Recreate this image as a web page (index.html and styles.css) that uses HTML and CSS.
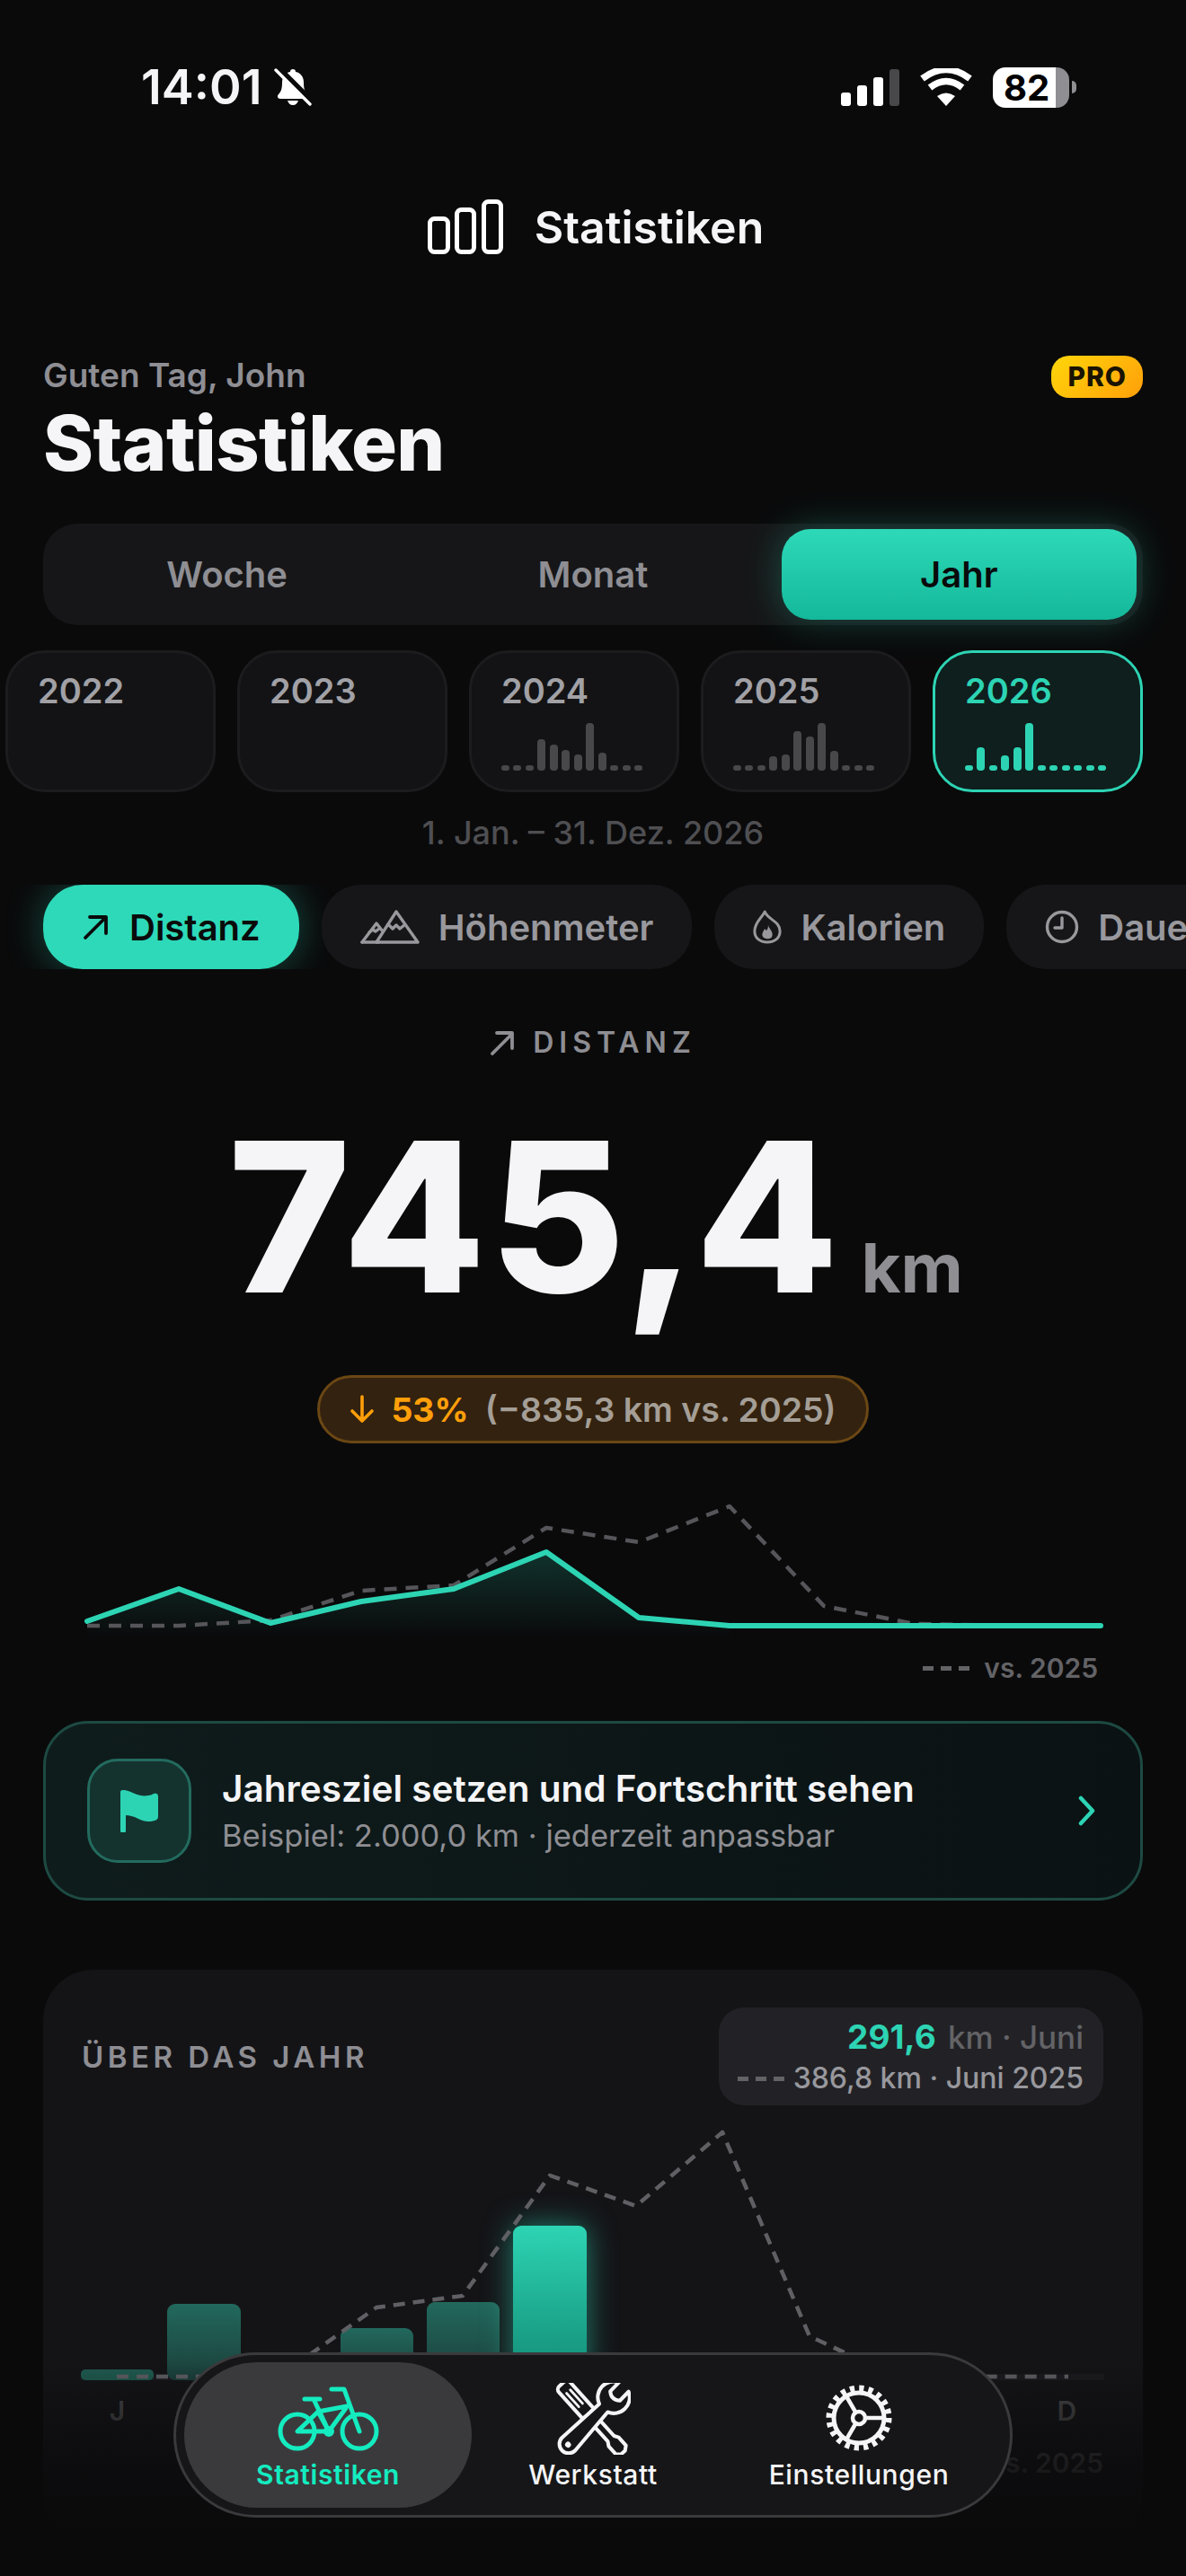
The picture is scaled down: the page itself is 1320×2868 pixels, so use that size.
FILE: index.html
```html
<!DOCTYPE html>
<html>
    <head>
        <title>Statistiken</title>
        <link rel="stylesheet" href="styles.css">
    </head>
    <body>
        <div class="screen">
            <!-- status bar -->
            <div class="status">
                <div class="statusLeft">
                    <span class="clock">14:01</span>
                    <svg class="bell" width="42" height="42" viewBox="0 0 42 42">
                        <path fill="#fff" d="M21 1c2 0 3 1 3 3 6 1 9 6 9 12 0 6 1 10 4 13 2 2 1 5-2 5H7c-3 0-4-3-2-5 3-3 4-7 4-13 0-6 3-11 9-12 0-2 1-3 3-3z"/>
                        <path fill="#fff" d="M15 36h12c-1 3-3 5-6 5s-5-2-6-5z"/>
                        <path stroke="#0a0a0b" stroke-width="8" d="M5 1l36 36"/>
                        <path stroke="#fff" stroke-width="3.400" stroke-linecap="round" d="M2 2l38 38"/>
                    </svg>
                </div>
                <div class="statusRight">
                    <div class="signal">
                        <i class="signalBar h15"></i>
                        <i class="signalBar h23"></i>
                        <i class="signalBar h32"></i>
                        <i class="signalBar h41 off"></i>
                    </div>
                    <svg class="wifi" width="58" height="42" viewBox="0 0 58 42">
                        <path fill="#fff" d="M19 31q10-7 20 0L29 42z"/>
                        <path fill="none" stroke="#fff" stroke-width="7.500" d="M11 21.500q18-14 36 0"/>
                        <path fill="none" stroke="#fff" stroke-width="7.500" d="M2.500 11.500q26.500-20 53 0"/>
                    </svg>
                    <div class="battery">82</div>
                    <i class="batteryNub"></i>
                </div>
            </div>

            <!-- title -->
            <div class="topbar">
                <svg width="84" height="61" viewBox="0 0 84 61" fill="none" stroke="#fff" stroke-width="5">
                    <rect x="2.500" y="21.500" width="20" height="37" rx="5"/>
                    <rect x="32.500" y="11.500" width="19" height="47" rx="5"/>
                    <rect x="62.500" y="2.500" width="19" height="56" rx="5"/>
                </svg>
                <span class="topbarTitle">Statistiken</span>
            </div>

            <div class="head">
                <div>
                    <div class="greeting">Guten Tag, John</div>
                    <h1 class="title">Statistiken</h1>
                </div>
                <span class="pro">PRO</span>
            </div>

            <div class="segment">
                <div class="segmentItem">Woche</div>
                <div class="segmentItem">Monat</div>
                <div class="segmentItem active">Jahr</div>
            </div>

            <!-- years -->
            <div class="years">
                <div class="yearCard">
                    <div class="yearName">2022</div>
                </div>
                <div class="yearCard">
                    <div class="yearName">2023</div>
                </div>
                <div class="yearCard">
                    <div class="yearName">2024</div>
                    <div class="miniBars">
                        <i style="height:6px"></i><i style="height:6px"></i><i style="height:6px"></i><i style="height:35px"></i><i style="height:29px"></i><i style="height:23px"></i><i style="height:18px"></i><i style="height:53px"></i><i style="height:20px"></i><i style="height:6px"></i><i style="height:6px"></i><i style="height:6px"></i>
                    </div>
                </div>
                <div class="yearCard">
                    <div class="yearName">2025</div>
                    <div class="miniBars">
                        <i style="height:6px"></i><i style="height:6px"></i><i style="height:6px"></i><i style="height:16px"></i><i style="height:18px"></i><i style="height:44px"></i><i style="height:38px"></i><i style="height:53px"></i><i style="height:22px"></i><i style="height:6px"></i><i style="height:6px"></i><i style="height:6px"></i>
                    </div>
                </div>
                <div class="yearCard active">
                    <div class="yearName">2026</div>
                    <div class="miniBars">
                        <i style="height:6px"></i><i style="height:26px"></i><i style="height:6px"></i><i style="height:17px"></i><i style="height:26px"></i><i style="height:53px"></i><i style="height:6px"></i><i style="height:6px"></i><i style="height:6px"></i><i style="height:6px"></i><i style="height:6px"></i><i style="height:6px"></i>
                    </div>
                </div>
            </div>

            <div class="range">1. Jan. – 31. Dez. 2026</div>

            <!-- metric pills -->
            <div class="metrics">
                <div class="metric active">
                    <svg width="32" height="30" viewBox="0 0 32 30" fill="none" stroke="#0a0a0b" stroke-width="3.800" stroke-linecap="round" stroke-linejoin="round">
                        <path d="M4 27L27 4M9 4h18v18"/>
                    </svg>
                    Distanz
                </div>
                <div class="metric">
                    <svg width="66" height="38" viewBox="0 0 66 38" fill="none" stroke="#98989d" stroke-width="3.400" stroke-linejoin="round" stroke-linecap="round">
                        <path d="M2 36L18 15l7 9M18 36L40 2l24 34z"/>
                        <path d="M2 36h18M10 25l4-3 3 2 4-3M31 16l5 5 4-4 4 4 5-4"/>
                    </svg>
                    Höhenmeter
                </div>
                <div class="metric">
                    <svg width="32" height="40" viewBox="0 0 34 40" fill="none" stroke="#98989d" stroke-width="3.200" stroke-linejoin="round">
                        <path d="M14 2C11 9 2 14 2 25c0 8 6 13 15 13s15-5 15-13C32 13 17 11 14 2z"/>
                        <path fill="#98989d" stroke="none" d="M18 17c0 4 5 7 5 12 0 4-3 5-6 5s-6-2-6-5c0-3 2-5 3-7 1 1 1 2 2 2 2-2 2-4 2-7z"/>
                    </svg>
                    Kalorien
                </div>
                <div class="metric">
                    <svg width="38" height="38" viewBox="0 0 38 38" fill="none" stroke="#98989d" stroke-width="3.400" stroke-linecap="round" stroke-linejoin="round">
                        <circle cx="19" cy="19" r="16.500"/>
                        <path d="M19 9v11h-8"/>
                    </svg>
                    Dauer
                </div>
            </div>

            <div class="metricLabel">
                <svg width="28" height="28" viewBox="0 0 28 28" fill="none" stroke="#8e8e93" stroke-width="3.800" stroke-linecap="round" stroke-linejoin="round">
                    <path d="M3 26L25 4M8 3h17v17"/>
                </svg>
                <span>DISTANZ</span>
            </div>

            <div class="bigValue">745<span class="bigComma">,</span>4<span class="bigUnit">km</span></div>

            <div class="deltaWrap">
                <div class="delta">
                    <svg width="28" height="32" viewBox="0 0 28 32" fill="none" stroke="#ff9f0a" stroke-width="3.600" stroke-linecap="round" stroke-linejoin="round">
                        <path d="M14 2v27M3 18l11 11 11-11"/>
                    </svg>
                    <b>53%</b>
                    <span>(−835,3 km vs. 2025)</span>
                </div>
            </div>

            <!-- sparkline -->
            <svg class="spark" width="1320" height="170" viewBox="0 1660 1320 170" fill="none">
                <defs>
                    <linearGradient id="sparkFill" x1="0" y1="0" x2="0" y2="1">
                        <stop offset="0" stop-color="#2dd4b4" stop-opacity=".2"/>
                        <stop offset="1" stop-color="#2dd4b4" stop-opacity="0"/>
                    </linearGradient>
                </defs>
                <path fill="url(#sparkFill)" d="M97 1804L199 1768 301 1806 402 1782 505 1768 608 1727 711 1800 812 1809 812 1822 97 1822z"/>
                <path stroke="#55555a" stroke-width="4.500" stroke-dasharray="14 10" stroke-linejoin="round" d="M97 1809L199 1809 301 1803 402 1770 505 1764 608 1700 711 1716 812 1676 917 1787 1018 1807 1124 1809"/>
                <path stroke="#2dd4b4" stroke-width="6" stroke-linecap="round" stroke-linejoin="round" d="M97 1804L199 1768 301 1806 402 1782 505 1768 608 1727 711 1800 812 1809 1225 1809"/>
            </svg>
            <div class="sparkLegend">
                <i class="dashKey"></i>
                <span>vs. 2025</span>
            </div>

            <!-- goal -->
            <div class="goal">
                <div class="goalIcon">
                    <svg width="44" height="48" viewBox="0 0 44 48">
                        <path fill="#2dd4b4" d="M1 3c0-1 1-2 2-2 6 0 9 2 14 4 5 2 10 3 15 2 2 0 4-1 6-2 3-1 5 0 5 3v22c0 3-1 4-4 5-6 2-12 1-18-2-6-3-10-4-14-4v17c0 2-1 3-3 3s-3-1-3-3z"/>
                    </svg>
                </div>
                <div class="goalText">
                    <div class="goalTitle">Jahresziel setzen und Fortschritt sehen</div>
                    <div class="goalSub">Beispiel: 2.000,0 km · jederzeit anpassbar</div>
                </div>
                <svg class="goalChevron" width="20" height="34" viewBox="0 0 20 34" fill="none" stroke="#2dd4b4" stroke-width="4.500" stroke-linecap="round" stroke-linejoin="round">
                    <path d="M4 3l13 14L4 31"/>
                </svg>
            </div>

            <!-- year chart -->
            <div class="chartCard">
                <div class="chartHead">
                    <div class="chartLabel">ÜBER DAS JAHR</div>
                    <div class="tip">
                        <div class="tipTop"><b>291,6</b> km · Juni</div>
                        <div class="tipBottom"><i class="dashKey"></i>386,8 km · Juni 2025</div>
                    </div>
                </div>
                <svg class="chart" width="1224" height="320" viewBox="48 2343 1224 320" fill="none">
                    <defs>
                        <linearGradient id="barDim" x1="0" y1="0" x2="0" y2="1">
                            <stop offset="0" stop-color="#22685c"/>
                            <stop offset="1" stop-color="#1b3f3b"/>
                        </linearGradient>
                        <linearGradient id="barOn" x1="0" y1="0" x2="0" y2="1">
                            <stop offset="0" stop-color="#2dd4b4"/>
                            <stop offset="1" stop-color="#128c75"/>
                        </linearGradient>
                    </defs>
                    <rect x="90" y="2642" width="1139" height="7" fill="#1b1b1f"/>
                    <rect x="90" y="2637" width="81" height="12" rx="5" fill="#1f5a50"/>
                    <rect x="186" y="2564" width="82" height="85" rx="9" fill="url(#barDim)"/>
                    <rect x="379" y="2591" width="81" height="58" rx="9" fill="url(#barDim)"/>
                    <rect x="475" y="2562" width="81" height="87" rx="9" fill="url(#barDim)"/>
                    <rect class="barGlow" x="571" y="2477" width="82" height="172" rx="9" fill="url(#barOn)"/>
                    <path stroke="#5f5f64" stroke-width="4.500" stroke-dasharray="13 9" stroke-linejoin="round" d="M130 2645L226 2645 323 2636 419 2568 515 2555 612 2421 708 2455 804 2373 901 2600 997 2645 1189 2645"/>
                </svg>
                <div class="months">
                    <span>J</span><span>F</span><span>M</span><span>A</span><span>M</span><span>J</span><span>J</span><span>A</span><span>S</span><span>O</span><span>N</span><span>D</span>
                </div>
                <div class="chartLegend">vs. 2025</div>
            </div>

            <div class="fade"></div>

            <!-- bottom nav -->
            <div class="tabbar">
                <div class="tab active">
                    <svg width="114" height="80" viewBox="0 0 114 80" fill="none" stroke="#14ecc0" stroke-width="5" stroke-linecap="round" stroke-linejoin="round">
                        <circle cx="23" cy="54" r="19"/>
                        <circle cx="92" cy="54" r="19"/>
                        <path d="M61 7h14l17 47M31 18h17M41 18l17 36M46 32l32-6M58 54L77 28M23 54h35L46 32z"/>
                        <circle cx="58" cy="54" r="4" stroke-width="4"/>
                    </svg>
                    <span>Statistiken</span>
                </div>
                <div class="tab">
                    <svg width="84" height="80" viewBox="0 0 84 80" fill="#161618" stroke="#f5f5f7" stroke-width="4.400" stroke-linecap="round" stroke-linejoin="round">
                        <g transform="translate(42 40) scale(.93) rotate(-42)">
                            <path d="M-9-51a5 5 0 0 1 5-5H4a5 5 0 0 1 5 5V-8H5V32L8 37V50L3 54H-3L-8 50V37L-5 32V-8H-9z"/>
                            <path d="M-3-44V-22M3-44V-22" stroke-width="3"/>
                        </g>
                        <g transform="translate(42 40) scale(.93) rotate(44)">
                            <path d="M-7-18A19 19 0 0 1-8-53V-38Q0-31 8-38V-53A19 19 0 0 1 7-18L11 42A11 11 0 0 1-11 42z"/>
                            <circle cx="0" cy="43" r="3.500" fill="#f5f5f7" stroke="none"/>
                        </g>
                    </svg>
                    <span>Werkstatt</span>
                </div>
                <div class="tab">
                    <svg width="76" height="80" viewBox="0 -1 76 80" fill="none" stroke="#f5f5f7" stroke-linecap="round">
                        <circle cx="38" cy="38" r="33" stroke-width="7" stroke-linecap="butt" stroke-dasharray="5.200 5.167"/>
                        <circle cx="38" cy="38" r="28" stroke-width="5"/>
                        <circle cx="38" cy="38" r="7" stroke-width="4.500"/>
                        <path stroke-width="4.500" d="M45 38h21M34.500 44l-10.500 18M34.500 32L24 14"/>
                    </svg>
                    <span>Einstellungen</span>
                </div>
            </div>
        </div>
    </body>
</html>
```

FILE: styles.css
```css
html,body {
    margin:0;
    background:#000;
}
.screen {
    position: relative;
    width:1320px;
    height:2868px;
    overflow:hidden;
    background:#0a0a0b;
    color:#f5f5f7;
    font-family:Inter, "Noto Sans", sans-serif;
}
/* status bar */
.status {
    display:flex;
    justify-content: space-between;
    align-items: center;
    height:46px;
    padding:74px 122px 0 157px;
}
.statusLeft {
    display:flex;
    align-items: center;
    gap:14px;
}
.clock {
    font-size:54px;
    font-weight:600;
    line-height:46px;
}
.statusRight {
    display:flex;
    align-items: center;
}
.signal {
    display:flex;
    align-items: flex-end;
    gap:7px;
    margin-right:23px;
}
.signalBar {
    width:11px;
    border-radius:3px;
    background:#fff;
}
.h15 { height:15px; }
.h23 { height:23px; }
.h32 { height:32px; }
.h41 { height:41px; }
.signalBar.off {
    background:#48484a;
}
.wifi {
    margin-right:23px;
}
.battery {
    width:85px;
    height:45px;
    border-radius:14px;
    background:linear-gradient(90deg,#fff 82%,#8e8e93 82%);
    color:#000;
    font-size:40px;
    font-weight:700;
    line-height:45px;
    text-align:center;
    padding-right:10px;
    box-sizing:border-box;
}
.batteryNub {
    width:5px;
    height:14px;
    margin-left:3px;
    border-radius:0 5px 5px 0;
    background:#8e8e93;
}
/* title */
.topbar {
    display:flex;
    justify-content:center;
    align-items:center;
    gap:35px;
    margin-top:102px;
    height:61px;
    padding-left:6px;
}
.topbarTitle {
    font-size:50px;
    font-weight:600;
}
.head {
    display:flex;
    justify-content:space-between;
    align-items:flex-start;
    margin-top:113px;
    padding:0 48px;
}
.greeting {
    font-size:37px;
    font-weight:600;
    line-height:44px;
    color:#8e8e93;
}
.title {
    margin:8px 0 0;
    font-size:85px;
    font-weight:800;
    line-height:92px;
    letter-spacing:-.7px;
}
.pro {
    padding:0 18px;
    height:47px;
    border-radius:20px;
    background:linear-gradient(135deg,#ffd60a,#ff9f0a);
    color:#1a1300;
    font-size:30px;
    font-weight:800;
    line-height:47px;
    letter-spacing:1px;
}
/* segment */
.segment {
    display:grid;
    grid-template-columns:repeat(3,1fr);
    gap:12px;
    margin:43px 48px 0;
    padding:6px 7px;
    height:113px;
    box-sizing:border-box;
    border-radius:38px;
    background:#161618;
}
.segmentItem {
    display:flex;
    justify-content:center;
    align-items:center;
    border-radius:32px;
    font-size:40px;
    font-weight:600;
    color:#8e8e93;
}
.segmentItem.active {
    background:linear-gradient(180deg,#2dd9b8,#14b89a);
    color:#0a0a0b;
    box-shadow:0 0 40px rgba(45,212,180,.3);
}
/* years */
.years {
    display:flex;
    gap:24px;
    margin-top:28px;
    padding-left:6px;
}
.yearCard {
    width:234px;
    height:158px;
    flex:none;
    box-sizing:border-box;
    padding:20px 0 0 33px;
    border:3px solid #1c1c1e;
    border-radius:44px;
    background:#131315;
}
.yearName {
    font-size:38px;
    font-weight:600;
    line-height:44px;
    color:#a1a1a6;
}
.miniBars {
    display:flex;
    align-items:flex-end;
    justify-content:space-between;
    width:157px;
    height:53px;
    margin-top:14px;
}
.miniBars i {
    width:9px;
    border-radius:4px;
    background:#48484a;
}
.yearCard.active {
    border-color:#2dd4b4;
    background:#0f1f1e;
}
.yearCard.active .yearName {
    color:#2dd4b4;
}
.yearCard.active .miniBars i {
    background:#2dd4b4;
}
.range {
    margin-top:21px;
    font-size:36px;
    font-weight:500;
    line-height:48px;
    text-align:center;
    color:#4f4f52;
}
/* metric pills */
.metrics {
    display:flex;
    gap:25px;
    margin-top:34px;
    padding-left:48px;
    overflow:hidden;
}
.metric {
    display:flex;
    align-items:center;
    flex:none;
    gap:21px;
    height:94px;
    padding:0 43px;
    box-sizing:border-box;
    border-radius:44px;
    background:#161618;
    font-size:40px;
    font-weight:600;
    color:#98989d;
}
.metric.active {
    background:#2dd9b8;
    color:#0a0a0b;
    box-shadow:0 0 40px rgba(45,212,180,.35);
}
.metricLabel {
    display:flex;
    justify-content:center;
    align-items:center;
    gap:20px;
    margin-top:62px;
    font-size:32px;
    font-weight:600;
    letter-spacing:6px;
    color:#8e8e93;
}
.bigValue {
    margin-top:61px;
    padding-left:6px;
    font-size:232px;
    font-weight:800;
    line-height:228px;
    letter-spacing:4px;
    text-align:center;
    white-space:nowrap;
}
.bigComma {
    margin:0 -6px;
}
.bigUnit {
    margin-left:21px;
    font-size:76px;
    font-weight:700;
    letter-spacing:0;
    color:#8e8e93;
}
.deltaWrap {
    display:flex;
    justify-content:center;
    margin-top:6px;
}
.delta {
    display:flex;
    align-items:center;
    gap:18px;
    height:76px;
    padding:0 33px;
    box-sizing:border-box;
    border:3px solid #6b4714;
    border-radius:38px;
    background:#33220f;
    font-size:37.500px;
    font-weight:600;
    color:#a49e96;
}
.delta b {
    font-weight:700;
    color:#ff9f0a;
}
.spark {
    display:block;
    margin-top:54px;
}
.dashKey {
    display:inline-block;
    width:52px;
    height:5px;
    background:repeating-linear-gradient(90deg,#636366 0 12px,transparent 12px 20px);
}
.sparkLegend {
    display:flex;
    justify-content:flex-end;
    align-items:center;
    gap:16px;
    margin-top:8px;
    padding-right:98px;
    font-size:30px;
    font-weight:600;
    line-height:36px;
    color:#636366;
}
/* goal card */
.goal {
    display:flex;
    align-items:center;
    height:200px;
    box-sizing:border-box;
    margin:41px 48px 0;
    padding:0 50px 0 46px;
    border:3px solid #1d4a43;
    border-radius:50px;
    background:linear-gradient(90deg,#0f1c1c,#0b1213);
}
.goalIcon {
    display:flex;
    justify-content:center;
    align-items:center;
    width:116px;
    height:116px;
    flex:none;
    box-sizing:border-box;
    border:3px solid #236b5e;
    border-radius:34px;
    background:#14332f;
}
.goalText {
    flex:1;
    margin-left:34px;
}
.goalTitle {
    font-size:40.500px;
    font-weight:600;
    line-height:52px;
}
.goalSub {
    margin-top:4px;
    font-size:34.500px;
    line-height:44px;
    color:#8e8e93;
}
/* chart card */
.chartCard {
    height:640px;
    margin:77px 48px 0;
    border-radius:56px;
    background:#141417;
    overflow:hidden;
}
.chartHead {
    display:flex;
    justify-content:space-between;
    align-items:center;
    padding:42px 44px 0 43px;
}
.chartLabel {
    font-size:33px;
    font-weight:600;
    letter-spacing:4.500px;
    color:#8e8e93;
}
.tip {
    width:428px;
    height:109px;
    box-sizing:border-box;
    padding:10px 22px 0 0;
    border-radius:28px;
    background:#222226;
    text-align:right;
}
.tipTop {
    font-size:35px;
    font-weight:500;
    line-height:46px;
    color:#636366;
}
.tipTop b {
    font-size:37px;
    font-weight:700;
    color:#2dd4b4;
    margin-right:4px;
}
.tipBottom {
    display:flex;
    justify-content:flex-end;
    align-items:center;
    gap:10px;
    font-size:32px;
    font-weight:500;
    line-height:46px;
    color:#98989d;
}
.chart {
    display:block;
}
.barGlow {
    filter:drop-shadow(0 0 16px rgba(45,212,180,.55));
}
.months {
    display:grid;
    grid-template-columns:repeat(12,1fr);
    gap:15px;
    padding:0 44px 0 42px;
    font-size:30px;
    font-weight:600;
    line-height:40px;
    text-align:center;
    color:#48484a;
}
.chartLegend {
    margin-top:20px;
    padding-right:44px;
    font-size:30px;
    font-weight:600;
    text-align:right;
    color:#48484a;
}
.fade {
    position:absolute;
    left:0;
    right:0;
    bottom:0;
    height:240px;
    background:linear-gradient(180deg,rgba(10,10,11,0),rgba(10,10,11,.7) 45%,#0a0a0b 80%);
}
/* bottom nav */
.tabbar {
    position:absolute;
    left:193px;
    top:2619px;
    display:flex;
    align-items:center;
    width:934px;
    height:184px;
    box-sizing:border-box;
    padding:0 9px;
    border:3px solid #3a3a3c;
    border-radius:92px;
    background:#161618;
}
.tab {
    display:flex;
    flex-direction:column;
    align-items:center;
    justify-content:flex-end;
    gap:4px;
    flex:none;
    width:296px;
    height:162px;
    box-sizing:border-box;
    padding-bottom:19px;
    border-radius:81px;
    font-size:30px;
    font-weight:500;
    letter-spacing:.6px;
}
.tab.active {
    width:320px;
    margin-right:-13px;
    background:#3a3a3c;
    color:#14ecc0;
    font-weight:600;
}
```
